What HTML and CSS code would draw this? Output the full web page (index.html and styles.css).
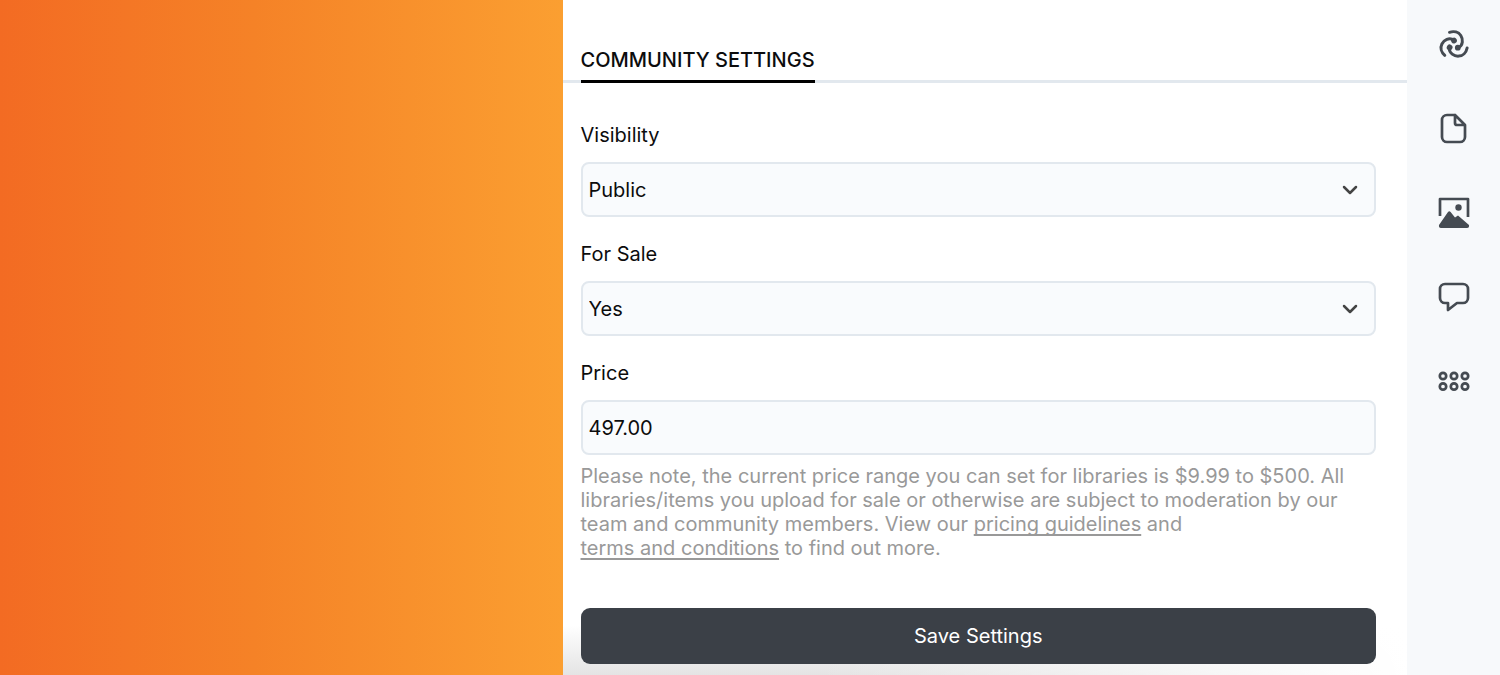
FILE: index.html
```html
<!DOCTYPE html>
<html lang="en">
<head>
  <meta charset="UTF-8">
  <meta name="viewport" content="width=device-width, initial-scale=1.0">
  <title>Community Settings</title>
  <link rel="stylesheet" href="styles.css">
</head>
<body>
  <div class="layout">
    <div class="cover"></div>

    <main class="settings">
      <header class="tabs">
        <h1 class="tab">COMMUNITY SETTINGS</h1>
      </header>
      <form class="settings-form">
        <div class="field">
          <label for="visibility">Visibility</label>
          <div class="select-wrap">
            <select id="visibility" class="control">
              <option selected>Public</option>
              <option>Private</option>
            </select>
            <svg class="chevron" viewBox="0 0 16 10"><path d="M2 2l6 6 6-6"/></svg>
          </div>
        </div>
        <div class="field">
          <label for="for-sale">For Sale</label>
          <div class="select-wrap">
            <select id="for-sale" class="control">
              <option selected>Yes</option>
              <option>No</option>
            </select>
            <svg class="chevron" viewBox="0 0 16 10"><path d="M2 2l6 6 6-6"/></svg>
          </div>
        </div>
        <div class="field">
          <label for="price">Price</label>
          <input id="price" class="control" type="text" value="497.00">
        </div>
        <p class="note">Please note, the current price range you can set for libraries is $9.99 to $500. All libraries/items you upload for sale or otherwise are subject to moderation by our team and community members. View our <a href="#">pricing guidelines</a> and <a href="#" class="terms">terms and conditions</a> to find out more.</p>
        <button type="button" class="save-btn">Save Settings</button>
      </form>
    </main>

    <nav class="sidebar">
      <a href="#" aria-label="Home">
        <svg class="swirl" viewBox="0 0 32 32">
          <g id="arm">
            <path d="M11.500 4.300C16 2.800 20.500 4 22.800 7.500S25.500 17.500 20 19.800"/>
            <circle class="solid" cx="19.800" cy="19.700" r="2.900"/>
          </g>
          <use href="#arm" transform="rotate(120 15.800 17.200)"/>
          <use href="#arm" transform="rotate(240 15.800 17.200)"/>
        </svg>
      </a>
      <a href="#" aria-label="Files">
        <svg viewBox="0 0 32 32"><path d="M17 3H9a5 5 0 0 0-5 5v17a5 5 0 0 0 5 5h13a5 5 0 0 0 5-5V13L17 3v8a2 2 0 0 0 2 2h8"/></svg>
      </a>
      <a href="#" aria-label="Images">
        <svg viewBox="0 0 32 32">
          <path d="M2 20V3h28v18"/>
          <circle class="solid" cx="20.500" cy="11.500" r="3.200"/>
          <path class="solid" d="M1 29L10 16q1.300-1.500 2.600 0L17 21.500l3-2 11 9.500q.5 3-2 3H3q-2.500 0-2-3z"/>
        </svg>
      </a>
      <a href="#" aria-label="Comments">
        <svg viewBox="0 0 32 32"><path d="M7 4h18a5 5 0 0 1 5 5v9a5 5 0 0 1-5 5h-6l-9 7v-7H7a5 5 0 0 1-5-5V9a5 5 0 0 1 5-5z"/></svg>
      </a>
      <a href="#" aria-label="Apps">
        <svg viewBox="0 0 32 32">
          <circle cx="5" cy="12" r="3.200"/><circle cx="16" cy="12" r="3.200"/><circle cx="27" cy="12" r="3.200"/>
          <circle cx="5" cy="22.500" r="3.200"/><circle cx="16" cy="22.500" r="3.200"/><circle cx="27" cy="22.500" r="3.200"/>
        </svg>
      </a>
    </nav>
  </div>
</body>
</html>
```
FILE: styles.css
```css
* {
  box-sizing: border-box;
}
body {
  margin: 0;
  font-family: Inter, 'Liberation Sans', sans-serif;
  font-size: 20px;
  line-height: 24px;
  color: #0c0c0d;
  background: #fff;
}
.layout {
  display: flex;
  min-height: 100vh;
}
.cover {
  flex: 0 0 37.5%;
  background: linear-gradient(90deg, #f36b23, #f58227 45%, #fb9f31);
}
.settings {
  flex: 1;
  min-width: 0;
  padding-top: 48px;
  background: linear-gradient(90deg, rgba(255,255,255,0) 30%, #fff) bottom / 100% 60px no-repeat,
    linear-gradient(#fff, #e4e4e4) bottom / 100% 50px no-repeat, #fff;
}
.tabs {
  display: flex;
  padding: 0 18px;
  border-bottom: 3px solid #e2e8ee;
}
.tab {
  margin: 0 0 -3px;
  padding-bottom: 8px;
  border-bottom: 3px solid #000;
  font-size: 20px;
  font-weight: 500;
}
.settings-form {
  padding: 40px 31px 11px 18px;
}
.field {
  display: flex;
  flex-direction: column;
  gap: 15px;
  margin-bottom: 25px;
}
.select-wrap {
  position: relative;
}
.control {
  display: block;
  width: 100%;
  height: 55px;
  padding: 0 6px;
  border: 2px solid #e2e8ee;
  border-radius: 8px;
  background: #f9fbfd;
  color: #0c0c0d;
  font: inherit;
  appearance: none;
}
.chevron {
  position: absolute;
  right: 18px;
  top: 23px;
  width: 16px;
  height: 10px;
  fill: none;
  stroke: #444;
  stroke-width: 2.5;
  stroke-linecap: round;
  stroke-linejoin: round;
  pointer-events: none;
}
.note {
  margin: -16px 0 48px;
  color: #999;
}
.note a {
  color: inherit;
  text-underline-offset: 3px;
  text-decoration-skip-ink: none;
}
.terms {
  white-space: nowrap;
}
.save-btn {
  display: block;
  width: 100%;
  height: 56px;
  border: none;
  border-radius: 9px;
  background: #3b4047;
  color: #fff;
  font: inherit;
  cursor: pointer;
}
.sidebar {
  flex: 0 0 93px;
  display: flex;
  flex-direction: column;
  align-items: center;
  gap: 52px;
  padding-top: 28px;
  background: #f7f9fb;
}
.sidebar a {
  height: 32px;
}
.sidebar svg {
  display: block;
  width: 32px;
  height: 32px;
  fill: none;
  stroke: #454b52;
  stroke-width: 2.7;
  stroke-linejoin: round;
}
.sidebar .swirl {
  stroke-width: 3;
  stroke-linecap: round;
}
.sidebar .solid {
  fill: #454b52;
  stroke: none;
}
```
